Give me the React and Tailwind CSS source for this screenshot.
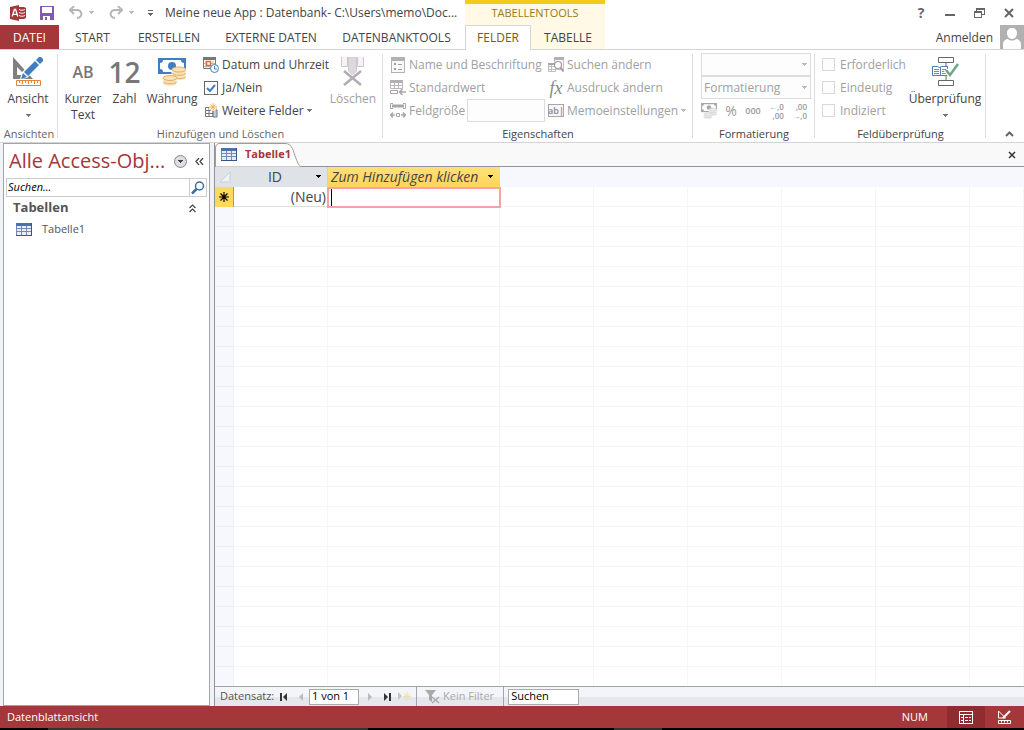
import React, { useState } from 'react';

const Caret = ({ className = 'text-[#777]' }) => (
  <svg width="5" height="3" viewBox="0 0 5 3" className={`shrink-0 ${className}`} shapeRendering="crispEdges">
    <path d="M0 0h5v1H4v1H3v1H2V2H1V1H0z" fill="currentColor" />
  </svg>
);

const AccessLogo = () => (
  <svg width="16" height="16" viewBox="0 0 16 16">
    <path d="M0 2 9 0v16L0 14z" fill="#a4373a" />
    <path d="M2.200 11.500 4.400 4.500h1.200l2.200 7M3 9.300h4" fill="none" stroke="#fff" strokeWidth="1.300" />
    <path d="M9 2h5l2 1v10l-2 1H9z" fill="#a4373a" />
    <path d="M9 4.500c2 1 4 1 6 0M9 7.500c2 1 4 1 6 0M9 10.500c2 1 4 1 6 0" fill="none" stroke="#fff" />
  </svg>
);

const SaveIcon = () => (
  <svg width="14" height="14" viewBox="0 0 14 14" shapeRendering="crispEdges">
    <path d="M0 0h14v14H0z" fill="#8459b0" />
    <path d="M2 1h10v6H2zM3 10h7v4H3z" fill="#fff" />
    <path d="M5 11h2v3H5z" fill="#8459b0" />
  </svg>
);

const UndoIcon = ({ flip }) => (
  <svg width="14" height="13" viewBox="0 0 14 13" fill="none" stroke="#b5b5b5" strokeWidth="2">
    {flip ? (
      <path d="M9 0l4 4-4 4M13 4H6C2 4 .5 8 2.500 10.500 3.500 11.700 5 12 6 12" />
    ) : (
      <path d="M5 0 1 4l4 4M1 4h7c4 0 5.500 4 3.500 6.500C10.500 11.700 9 12 8 12" />
    )}
  </svg>
);

const DesignIcon = () => (
  <svg width="30" height="30" viewBox="0 0 30 30">
    <path d="M0 0v22h20L0 0zm4 10 8 8H4z" fill="#808080" fillRule="evenodd" />
    <path d="M7 22l2-7L25 0l5 5-16 16z" fill="#fff" />
    <path d="M8 22l2-6 4 4zM11 15 22 4l4 4-11 11zM23 3l3-3h2l2 2v2l-3 3z" fill="#3f7fc1" />
    <path d="M3.500 23.500h24v5h-24z" fill="#fff" stroke="#e8833a" />
    <path d="M6.500 24v2m3-2v3m3-3v2m3-2v3m3-3v2m3-2v3m3-3v2" stroke="#e8833a" />
  </svg>
);

const Coins = ({ fill, line }) => (
  <g>
    <path d="M14 12v8c0 3 14 3 14 0v-8zM5 20v6c0 3 14 3 14 0v-6z" fill={fill} stroke="#fff" />
    <ellipse cx="21" cy="11.500" rx="7" ry="2.500" fill={fill} stroke={line} />
    <path d="M14 15c1 3 13 3 14 0M14 18.500c1 3 13 3 14 0" fill="none" stroke={line} />
    <ellipse cx="12" cy="20" rx="7" ry="2.500" fill={fill} stroke={line} />
    <path d="M5 23.500c1 3 13 3 14 0" fill="none" stroke={line} />
  </g>
);

const MoneyIcon = ({ size = 28, note = '#3f7fc1', fill = '#f9e1b5', line = '#e0b068' }) => (
  <svg width={size} height={size} viewBox="0 0 28 28">
    <path d="M0 0h28v16H0z" fill={note} />
    <path d="M5 2h18c0 2 1 3 3 3v6c-2 0-3 1-3 3H5c0-2-1-3-3-3V5c2 0 3-1 3-3z" fill="#fff" />
    <circle cx="14" cy="8" r="4" fill={note} />
    <Coins fill={fill} line={line} />
  </svg>
);

const DateIcon = () => (
  <svg width="16" height="16" viewBox="0 0 16 16">
    <path d="M.5.500h12v11H.500z" fill="#fff" stroke="#777" />
    <path d="M0 0h13v3H0z" fill="#777" />
    <path d="M3 4v7M7 4v7M10 4v7M1 6.500h11M1 9.500h11" stroke="#bbb" />
    <path d="M3.500 4.500h4v4h-4z" fill="#fff" stroke="#e06c2b" strokeWidth="1.500" />
    <circle cx="11.500" cy="11.500" r="4" fill="#fff" stroke="#3f7fc1" />
    <path d="M11.500 9v3H14" fill="none" stroke="#3f7fc1" />
  </svg>
);

const MoreFieldsIcon = () => (
  <svg width="14" height="15" viewBox="0 0 14 15">
    <path d="M1.500 4.500h11v9h-11zM5 4v10M9 4v10M1 7.500h11M1 10.500h11" fill="none" stroke="#777" />
    <path d="M9 7h4v7H9z" fill="#b5cde8" stroke="#777" />
    <circle cx="9" cy="4" r="4" fill="#fff" />
    <path d="M9 0v8M5 4h8M6.500 1.500l5 5M11.500 1.500l-5 5" stroke="#eeb04d" />
  </svg>
);

const DeleteIcon = () => (
  <svg width="24" height="30" viewBox="0 0 24 30">
    <path d="M.5 0v9.500h6V0M16.500 0v9.500h6V0" fill="#f5f3f5" stroke="#ccc8cc" />
    <path d="M7.500 0h8v14l-4 4-4-4z" fill="#ddd8dd" stroke="#ccc8cc" />
    <path d="M3 14l17 14M20 14 3 28" stroke="#b0acb0" strokeWidth="2.500" />
  </svg>
);

const CaptionIcon = () => (
  <svg width="14" height="16" viewBox="0 0 14 16" shapeRendering="crispEdges">
    <path d="M.5.500h13v15H.500z" fill="#fbf7fb" stroke="#b5b0b5" />
    <path d="M0 0h14v4H0z" fill="#b5b0b5" />
    <path d="M3 6h2v2H3zM3 11h2v2H3zM7 7h4v1H7zM7 12h4v1H7z" fill="#a29da2" />
  </svg>
);

const DefaultIcon = () => (
  <svg width="16" height="15" viewBox="0 0 16 15">
    <path d="M.5.500h12v8H.500zM4.500 2v6M8.500 2v6M0 5.500h13" fill="none" stroke="#bcb8bc" />
    <path d="M0 0h13v3H0z" fill="#b5b0b5" />
    <path d="M.5 10.500h7v3h-7z" fill="none" stroke="#a8a4a8" />
    <path d="M16 12h-6M12.500 9l-3 3 3 3" fill="none" stroke="#a8a4a8" strokeWidth="1.500" />
  </svg>
);

const SizeIcon = () => (
  <svg width="16" height="16" viewBox="0 0 16 16" fill="none" stroke="#a8a4a8">
    <path d="M3 .500H.500v5H3M13 .500h2.500v5H13" />
    <path d="M2 3h12" strokeWidth="3" />
    <path d="M6.500 10.500h3v3h-3z" />
    <path d="M0 12h5M11 12h5M3 9.500.500 12 3 14.500M13 9.500l2.500 2.500-2.500 2.500" strokeWidth="1.500" />
  </svg>
);

const LookupIcon = () => (
  <svg width="16" height="16" viewBox="0 0 16 16">
    <path d="M6.500.500h9v12h-9z" fill="#f8f5f8" stroke="#c5c1c5" />
    <path d="M6 0h10v3H6z" fill="#b5b0b5" />
    <path d="M.5 6.500h7v8h-7zM0 9.500h7M0 12.500h7M3.500 7v7" fill="#fff" stroke="#c0bcc0" />
    <path d="M0 6h7v2H0z" fill="#aaa5aa" />
    <circle cx="10" cy="8" r="3.500" fill="#fff" stroke="#a29da2" strokeWidth="1.200" />
    <path d="M12.500 10.500l3 4" stroke="#a29da2" strokeWidth="2" />
  </svg>
);

const MemoIcon = () => (
  <span className="flex h-[13px] w-4 items-center justify-center border border-[#aaa5aa] bg-[#f8f4f8] text-[9px] leading-3 font-semibold text-[#888]">
    ab|
  </span>
);

const ValidateIcon = () => (
  <svg width="27" height="30" viewBox="0 0 27 30">
    <path d="M6.500.500h15v5h-15zM6.500 23.500h15v5h-15zM14 6v4M14 19v4" fill="#fff" stroke="#666" />
    <path d="M.5 9.500h5l2 1 2-1h6v9H.500zM8.500 10v9" fill="#fff" stroke="#4a7fb5" />
    <path d="M2 12.500h5M2 14.500h5M2 16.500h5M10 12.500h4M10 14.500h4M10 16.500h4" stroke="#888" />
    <path d="M14 13l4 5 8-11" fill="none" stroke="#fff" strokeWidth="5" />
    <path d="M14 13l4 5 8-11" fill="none" stroke="#6fa58e" strokeWidth="2.500" />
  </svg>
);

const TableIcon = () => (
  <svg width="16" height="13" viewBox="0 0 16 13" shapeRendering="crispEdges">
    <path d="M0 0h16v13H0z" fill="#6f8cba" />
    <path d="M0 0h16v3H0z" fill="#4f6fa8" />
    <path d="M0 12h16v1H0zM15 0h1v13h-1z" fill="#3b5486" />
    <path d="M1 3h4v2H1zM6 3h4v2H6zM11 3h4v2h-4zM1 6h4v2H1zM6 6h4v2H6zM11 6h4v2h-4zM1 9h4v3H1zM6 9h4v3H6zM11 9h4v3h-4z" fill="#e6edf8" />
  </svg>
);

const ribbonTabs = [
  { name: 'START', width: 'w-[67px]' },
  { name: 'ERSTELLEN', width: 'w-[86px]' },
  { name: 'EXTERNE DATEN', width: 'w-[118px]' },
  { name: 'DATENBANKTOOLS', width: 'w-[133px]' },
];

const RibbonGroup = ({ title, className = '', bodyClass = '', dark, children }) => (
  <section className={`relative flex shrink-0 flex-col pt-[3px] ${className}`}>
    <div className={`flex h-[73px] ${bodyClass}`}>{children}</div>
    <h2 className={`text-center text-[11px] leading-4 ${dark ? 'text-[#444]' : 'text-[#666]'}`}>{title}</h2>
    <span className="absolute top-1 right-0 bottom-1 w-px bg-[#dcdcdc]" />
  </section>
);

const BigButton = ({ icon, width, disabled, children }) => (
  <button disabled={disabled} className={`flex shrink-0 flex-col items-center leading-4 ${width} ${disabled ? 'text-[#a0a0a0]' : ''}`}>
    <span className="flex h-[38px] items-center">{icon}</span>
    {children}
  </button>
);

const SmallButton = ({ icon, disabled, caret, children }) => (
  <button disabled={disabled} className={`flex h-[23px] items-center gap-[3px] ${disabled ? 'text-[#a0a0a0]' : ''}`}>
    <span className="flex w-4 justify-center">{icon}</span>
    <span>{children}</span>
    {caret && <Caret className={disabled ? 'text-[#bbb]' : 'text-[#777]'} />}
  </button>
);

const FormatSelect = ({ label, children }) => (
  <div className="relative h-[23px]">
    <select disabled aria-label={label} className="h-full w-full appearance-none border border-[#dcdcdc] bg-[#fdfdfd] pl-[2px] text-[#a0a0a0] opacity-100">
      {children}
    </select>
    <span className="pointer-events-none absolute inset-y-0 right-1 flex items-center">
      <Caret className="text-[#bbb]" />
    </span>
  </div>
);

const DecimalButton = ({ label, top, bottom }) => (
  <button disabled aria-label={label} className="text-right text-[8px] leading-[9px] font-semibold">
    <span className="block">{top}</span>
    <span className="block">{bottom}</span>
  </button>
);

const TitleBar = () => (
  <div className="flex h-[25px]">
    <div className="flex w-[465px] shrink-0 items-center pl-[10px]">
      <AccessLogo />
      <button aria-label="Speichern" className="ml-[14px]"><SaveIcon /></button>
      <button aria-label="Rückgängig" className="ml-[15px] flex items-center gap-[6px]"><UndoIcon /><Caret className="text-[#bbb]" /></button>
      <button aria-label="Wiederholen" className="ml-[15px] flex items-center gap-[6px]"><UndoIcon flip /><Caret className="text-[#bbb]" /></button>
      <button aria-label="Schnellzugriff anpassen" className="ml-[14px] flex flex-col items-center gap-[2px]">
        <span className="h-px w-[5px] bg-[#666]" />
        <Caret className="text-[#666]" />
      </button>
      <h1 className="ml-3 text-xs whitespace-nowrap">Meine neue App : Datenbank- C:\Users\memo\Doc...</h1>
    </div>
    <div className="w-[140px] shrink-0 border-t-4 border-[#f5ca1b] bg-[#fff9e5] text-center text-[11px] leading-[18px] text-[#997a12]">
      TABELLENTOOLS
    </div>
    <div className="flex flex-1 items-center justify-end gap-[19px] pr-[10px] text-[#666]">
      <button aria-label="Hilfe" className="w-[10px] text-sm font-bold">?</button>
      <button aria-label="Minimieren">
        <svg width="10" height="12"><path d="M0 7h10v2H0z" fill="currentColor" /></svg>
      </button>
      <button aria-label="Verkleinern">
        <svg width="11" height="12" fill="none" stroke="currentColor" shapeRendering="crispEdges">
          <path d="M2.500 4V1.500h8v6H8M.500 4.500h7v6h-7zM0 5.500h8M2 2.500h9" />
        </svg>
      </button>
      <button aria-label="Schließen">
        <svg width="10" height="10"><path d="M1 1l8 8M9 1 1 9" stroke="currentColor" strokeWidth="2" /></svg>
      </button>
    </div>
  </div>
);

const TabRow = () => (
  <nav className="flex h-[25px] border-b border-[#d4d4d4] text-xs leading-5">
    <div className="flex w-[465px] shrink-0">
      <button className="w-[59px] bg-[#a4373a] pt-[2px] text-white">DATEI</button>
      {ribbonTabs.map((tab) => (
        <button key={tab.name} className={`pt-[2px] whitespace-nowrap ${tab.width}`}>{tab.name}</button>
      ))}
    </div>
    <div className="flex w-[140px] shrink-0 bg-[#fff9e5]">
      <button className="-mb-px w-[66px] border border-b-0 border-[#d4d4d4] bg-white text-[#7d5c00]">FELDER</button>
      <button className="w-[74px] pt-[2px]">TABELLE</button>
    </div>
    <div className="flex flex-1 items-center justify-end gap-[7px]">
      <a href="#anmelden" className="pt-[2px]">Anmelden</a>
      <svg width="24" height="24" viewBox="0 0 24 24">
        <path d="M0 0h24v24H0z" fill="#b1b1b1" />
        <path d="M12 3c3 0 5 2 5 5s-2 6-5 6-5-3-5-6 2-5 5-5zM3 24v-5c0-3 3-5 5-5 2 2 6 2 8 0 2 0 5 2 5 5v5z" fill="#fff" />
      </svg>
    </div>
  </nav>
);

const Ribbon = () => {
  const [yesNo, setYesNo] = useState(true);

  return (
    <div className="flex h-[93px] border-b border-[#d4d4d4] text-xs whitespace-nowrap">
      <RibbonGroup title="Ansichten" className="w-[58px]">
        <BigButton icon={<DesignIcon />} width="w-[56px]">
          <span>Ansicht</span>
          <span className="flex h-4 items-center"><Caret /></span>
        </BigButton>
      </RibbonGroup>

      <RibbonGroup title="Hinzufügen und Löschen" className="w-[325px]">
        <BigButton icon={<b className="text-base font-semibold text-[#777]">AB</b>} width="w-[50px]">
          <span>Kurzer</span>
          <span>Text</span>
        </BigButton>
        <BigButton icon={<b className="text-[28px] font-semibold text-[#777]">12</b>} width="w-[33px]">Zahl</BigButton>
        <BigButton icon={<MoneyIcon />} width="w-[62px]">Währung</BigButton>
        <div className="w-[124px]">
          <SmallButton icon={<DateIcon />}>Datum und Uhrzeit</SmallButton>
          <label className="flex h-[23px] items-center gap-1">
            <span className="relative ml-px flex">
              <input
                type="checkbox"
                checked={yesNo}
                onChange={(e) => setYesNo(e.target.checked)}
                className="size-[14px] appearance-none border border-[#666] bg-white"
              />
              {yesNo && (
                <svg width="14" height="14" className="pointer-events-none absolute inset-0">
                  <path d="M3 7l3 3 5-6" fill="none" stroke="#3f7fc1" strokeWidth="2" />
                </svg>
              )}
            </span>
            Ja/Nein
          </label>
          <SmallButton icon={<MoreFieldsIcon />} caret>Weitere Felder</SmallButton>
        </div>
        <BigButton icon={<DeleteIcon />} width="w-[52px]" disabled>Löschen</BigButton>
      </RibbonGroup>

      <RibbonGroup title="Eigenschaften" className="w-[310px]" bodyClass="pl-[7px]" dark>
        <div className="w-[158px]">
          <SmallButton icon={<CaptionIcon />} disabled>Name und Beschriftung</SmallButton>
          <SmallButton icon={<DefaultIcon />} disabled>Standardwert</SmallButton>
          <div className="flex h-[23px] items-center text-[#a0a0a0]">
            <SizeIcon />
            <label htmlFor="field-size" className="w-[61px] pl-[3px]">Feldgröße</label>
            <input id="field-size" disabled className="h-[23px] w-[78px] border border-[#dcdcdc] bg-[#fdfdfd]" />
          </div>
        </div>
        <div>
          <SmallButton icon={<LookupIcon />} disabled>Suchen ändern</SmallButton>
          <SmallButton icon={<i className="font-['Liberation_Serif',serif] text-lg leading-4 text-[#888]">fx</i>} disabled>Ausdruck ändern</SmallButton>
          <SmallButton icon={<MemoIcon />} disabled caret>Memoeinstellungen</SmallButton>
        </div>
      </RibbonGroup>

      <RibbonGroup title="Formatierung" className="w-[122px]" dark>
        <div className="mr-1 ml-2 flex flex-1 flex-col">
          <FormatSelect label="Datentyp"><option></option></FormatSelect>
          <FormatSelect label="Format"><option>Formatierung</option></FormatSelect>
          <div className="flex h-[23px] items-center justify-between pr-1 text-[#999]">
            <button disabled aria-label="Währungsformat"><MoneyIcon size={16} note="#aaa6aa" fill="#eee" line="#c5c1c5" /></button>
            <button disabled className="text-sm">%</button>
            <button disabled className="text-[9px] font-semibold">000</button>
            <DecimalButton label="Dezimalstelle hinzufügen" top="←,0" bottom=",00" />
            <DecimalButton label="Dezimalstelle entfernen" top=",00" bottom="→,0" />
          </div>
        </div>
      </RibbonGroup>

      <RibbonGroup title="Feldüberprüfung" className="w-[171px]" bodyClass="pl-[7px]" dark>
        <div className="w-[86px] text-[#a0a0a0]">
          {['Erforderlich', 'Eindeutig', 'Indiziert'].map((name) => (
            <label key={name} className="flex h-[23px] items-center gap-[5px]">
              <input type="checkbox" disabled className="size-[13px] appearance-none border border-[#d8d8d8] bg-[#fdfdfd]" />
              {name}
            </label>
          ))}
        </div>
        <BigButton icon={<ValidateIcon />} width="w-[74px]">
          <span>Überprüfung</span>
          <span className="flex h-4 items-center"><Caret /></span>
        </BigButton>
      </RibbonGroup>

      <div className="flex flex-1 items-end justify-end pr-[10px] pb-[5px]">
        <button aria-label="Menüband reduzieren">
          <svg width="9" height="6"><path d="M1 5l3.500-3.500L8 5" fill="none" stroke="#666" strokeWidth="2" /></svg>
        </button>
      </div>
    </div>
  );
};

const NavigationPane = () => (
  <aside className="ml-[3px] w-[207px] shrink-0 border border-[#a0a4ac] bg-white">
    <div className="flex h-[34px] items-center pr-[5px] pl-[5px]">
      <h2 className="w-[165px] text-xl whitespace-nowrap text-[#a4373a]">Alle Access-Obj...</h2>
      <button aria-label="Kategorie" className="flex size-[13px] shrink-0 items-center justify-center rounded-full border border-[#888] bg-[#dcdee3]">
        <Caret className="text-[#444]" />
      </button>
      <button aria-label="Navigationsbereich schließen" className="ml-2">
        <svg width="9" height="7" fill="none" stroke="#444" strokeWidth="1.300"><path d="M4 0 1 3.500 4 7M8 0 5 3.500 8 7" /></svg>
      </button>
    </div>
    <div className="mr-[2px] ml-[2px] flex h-[19px] border border-[#ccc]">
      <input aria-label="Objekte suchen" placeholder="Suchen..." className="min-w-0 flex-1 pl-[1px] text-[11px] italic outline-none placeholder:text-black" />
      <button aria-label="Suchen" className="flex w-[17px] items-center justify-center border-l border-[#ccc]">
        <svg width="14" height="14" fill="none" stroke="#3a6ea5">
          <circle cx="8.500" cy="5" r="4" strokeWidth="1.500" />
          <path d="M5.500 8 1 12.500" strokeWidth="2.500" />
        </svg>
      </button>
    </div>
    <div className="flex h-[22px] items-center justify-between pr-[13px] pl-[9px] text-[13px] font-bold text-[#555]">
      Tabellen
      <svg width="7" height="9" fill="none" stroke="#444" strokeWidth="1.200"><path d="M.5 4l3-3 3 3M.5 8l3-3 3 3" /></svg>
    </div>
    <button className="flex h-5 items-center gap-[10px] pl-3 text-[11px] text-[#555]">
      <TableIcon />
      Tabelle1
    </button>
  </aside>
);

const DocumentTabs = () => (
  <div className="flex h-6 shrink-0 items-center justify-between border-b border-[#8f949c] bg-[#f9f9f9] pr-2">
    <button className="relative h-6 w-[88px]">
      <svg width="88" height="24" className="absolute inset-0">
        <path d="M.5 24V5C.5 2 2 .500 5 .500h65c8 0 8 8 11 15 2 5 3 8 6 8.500z" fill="#fff" stroke="#a59a90" />
      </svg>
      <span className="relative flex items-center gap-2 pl-[6px] text-[11px] font-bold text-[#a4373a]">
        <TableIcon />
        Tabelle1
      </span>
    </button>
    <button aria-label="Tabelle schließen">
      <svg width="8" height="8"><path d="M1 1l6 6M7 1 1 7" stroke="#333" strokeWidth="1.500" /></svg>
    </button>
  </div>
);

const emptyColumns = ['a', 'b', 'c', 'd', 'e', 'f'];
const emptyRows = Array.from({ length: 60 }, (_, i) => i);

const Datasheet = () => (
  <div className="min-h-0 flex-1 overflow-hidden bg-white">
    <table className="w-full table-fixed border-separate border-spacing-0 text-sm leading-4">
      <colgroup>
        <col className="w-[19px]" />
        <col className="w-[94px]" />
        <col className="w-[172px]" />
        <col className="w-[94px]" />
        <col className="w-[94px]" />
        <col className="w-[94px]" />
        <col className="w-[94px]" />
        <col className="w-[94px]" />
        <col />
      </colgroup>
      <thead>
        <tr className="h-5">
          <th className="bg-[#dfe2e7] p-0">
            <svg width="13" height="13" className="ml-1"><path d="M11 1v10H1z" fill="#eef1f5" stroke="#c8ced8" /></svg>
          </th>
          <th className="border-r border-[#cdd1d8] bg-[#dfe2e7] p-0 pb-px font-normal">
            <div className="flex items-center pr-[6px]">
              <span className="flex-1">ID</span>
              <Caret className="text-black" />
            </div>
          </th>
          <th className="bg-linear-to-b from-[#ffe178] to-[#ffd45a] p-0 pb-px font-normal">
            <div className="flex items-center justify-between pr-[7px] pl-[3px]">
              <i>Zum Hinzufügen klicken</i>
              <Caret className="text-black" />
            </div>
          </th>
          {emptyColumns.map((c) => <th key={c} className="bg-[#f7f8fe] p-0" />)}
        </tr>
      </thead>
      <tbody>
        <tr className="h-5">
          <th className="border-r border-[#999] bg-[#ffd95e] p-0">
            <svg width="10" height="10" className="mx-auto"><path d="M5 0v10M0 5h10M1.500 1.500l7 7M8.500 1.500l-7 7" stroke="#000" strokeWidth="1.200" /></svg>
          </th>
          <td className="border-b border-[#dedede] p-0 pr-[2px] text-right">(Neu)</td>
          <td className="relative p-0">
            <input aria-label="Neues Feld" className="absolute -inset-x-px top-0 h-[21px] border-2 border-[#f4a4a8] bg-white pl-1 caret-transparent outline-none w-[174px]" />
            {/* text cursor */}
            <span className="pointer-events-none absolute top-[2px] left-[3px] h-[17px] w-px bg-black" />
          </td>
          {emptyColumns.map((c) => <td key={c} className="border-r border-b border-[#f6f6f8] p-0" />)}
        </tr>
        {emptyRows.map((row) => (
          <tr key={row} className="h-5">
            <th className="border-r border-b border-[#eeeef6] bg-[#f7f8fe] p-0" />
            <td className="border-r border-b border-[#f6f6f8] p-0" />
            <td className="border-r border-b border-[#f6f6f8] p-0" />
            {emptyColumns.map((c) => <td key={c} className="border-r border-b border-[#f6f6f8] p-0" />)}
          </tr>
        ))}
      </tbody>
    </table>
  </div>
);

const RecordBar = () => (
  <div className="flex h-5 shrink-0 items-center border-t border-[#a0a4ac] bg-linear-to-b from-[#f4f5f8] from-50% to-[#e6e7ec] to-50% pl-[5px] text-[11px] whitespace-nowrap">
    <span className="w-[60px] text-[#555]">Datensatz:</span>
    <button aria-label="Erster Datensatz"><svg width="8" height="8"><path d="M0 0h2v8H0zM7 0v8L3 4z" fill="#333" /></svg></button>
    <button aria-label="Vorheriger Datensatz" className="ml-[10px]"><svg width="6" height="8"><path d="M5 0v8L1 4z" fill="#bbb" /></svg></button>
    <input aria-label="Aktueller Datensatz" defaultValue="1 von 1" className="ml-[5px] h-4 w-[50px] border border-[#aaa] bg-white pl-[2px] text-black" />
    <button aria-label="Nächster Datensatz" className="ml-[9px]"><svg width="6" height="8"><path d="M0 0l4 4-4 4z" fill="#bbb" /></svg></button>
    <button aria-label="Letzter Datensatz" className="ml-[10px]"><svg width="8" height="8"><path d="M0 0l4 4-4 4zM5 0h2v8H5z" fill="#333" /></svg></button>
    <button aria-label="Neuer Datensatz" className="ml-[6px]">
      <svg width="13" height="9"><path d="M0 0l4 4-4 4z" fill="#c5c5c5" /><path d="M9 0v9M5 4.500h8M6 1.500l6 6M12 1.500l-6 6" stroke="#f0dfa8" /></svg>
    </button>
    <div className="ml-[5px] flex h-full items-center gap-[3px] border-x border-[#a0a4ac] pr-[9px] pl-2 text-[#aaa]">
      <svg width="15" height="14">
        <path d="M0 0h11L7 5v7l-3-2V5z" fill="#aaa" />
        <path d="M7 7l7 6M14 7l-7 6" stroke="#aaa" strokeWidth="1.500" />
      </svg>
      <button disabled>Kein Filter</button>
    </div>
    <input aria-label="Suchen" defaultValue="Suchen" className="ml-1 h-4 w-[71px] border border-[#aaa] bg-white pl-[2px] text-black" />
  </div>
);

const StatusBar = () => (
  <footer className="flex h-[22px] shrink-0 items-center bg-[#a4373a] pl-[7px] text-[11px] text-white">
    <span className="flex-1">Datenblattansicht</span>
    <span className="mr-[19px]">NUM</span>
    <button aria-label="Datenblattansicht" className="flex h-full w-[38px] items-center justify-center bg-[#8f2c30]">
      <svg width="14" height="13" fill="none" stroke="#fff" shapeRendering="crispEdges">
        <path d="M.5.500h13v12H.500zM0 3.500h14M4.500 3v10M6 6.500h3M10 6.500h2M6 9.500h3M10 9.500h2M2 6.500h2M2 9.500h2" />
      </svg>
    </button>
    <button aria-label="Entwurfsansicht" className="flex h-full w-[39px] items-center justify-center">
      <svg width="15" height="14" fill="none" stroke="#fff">
        <path d="M1.500 1v7h7zM1.500 10.500h12v3h-12zM4.500 11v1.500M7.500 11v1.500M10.500 11v1.500" />
        <path d="M6 8l7-7" strokeWidth="2" />
      </svg>
    </button>
  </footer>
);

export default function App() {
  return (
    <div className="flex h-screen flex-col overflow-hidden bg-white font-['Open_Sans','Noto_Sans',sans-serif] text-[#444]">
      <header>
        <TitleBar />
        <TabRow />
        <Ribbon />
      </header>
      <main className="flex min-h-0 flex-1 bg-[#f1f2f5]">
        <NavigationPane />
        <div className="ml-1 flex min-w-0 flex-1 flex-col border-l border-[#8f949c]">
          <DocumentTabs />
          <Datasheet />
          <RecordBar />
        </div>
      </main>
      <StatusBar />
      {/* top edge of the desktop taskbar */}
      <div className="flex h-[2px] shrink-0 bg-black">
        <span className="ml-12 w-80 bg-[#333]" />
        <span className="ml-[246px] w-12 bg-[#333]" />
      </div>
    </div>
  );
}
